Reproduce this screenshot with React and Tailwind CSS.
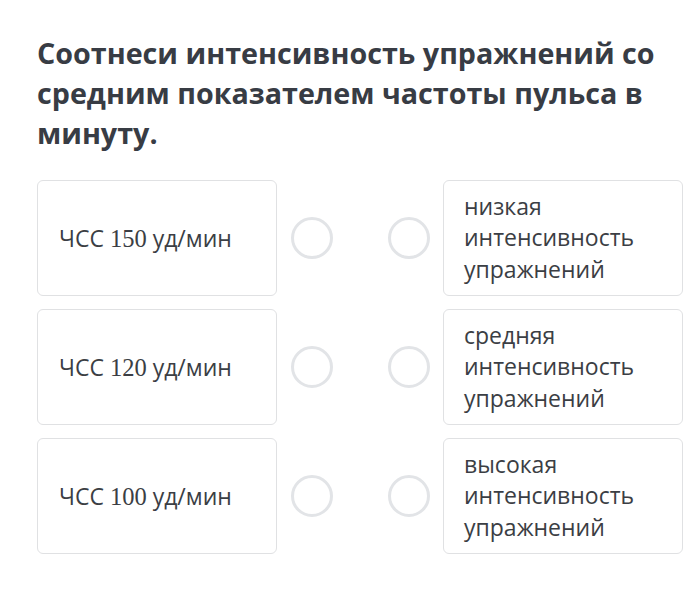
import React from "react";

const rows = [
  { n: "150", r: ["низкая", "интенсивность", "упражнений"] },
  { n: "120", r: ["средняя", "интенсивность", "упражнений"] },
  { n: "100", r: ["высокая", "интенсивность", "упражнений"] },
];

export default function App() {
  return (
    <div className="w-[699px] h-[613px] bg-white pl-[37px] pt-[33px] text-[#3b3e44]" style={{ fontFamily: '"Open Sans", sans-serif' }}>
      <h1 className="text-[28.7px] leading-[40px] font-bold text-[#383c44] w-[650px]">
        Соотнеси интенсивность упражнений со средним показателем частоты пульса в минуту.
      </h1>
      <div className="mt-[27px] flex flex-col gap-[13px]">
        {rows.map((row) => (
          <div key={row.n} className="flex items-center h-[116px]">
            <div className="w-[240px] h-full border-[1.5px] border-[#e0e1e3] rounded-[6px] flex items-center pl-[21px] text-[23px] leading-[31px]">
              <span>ЧСС&nbsp;</span>
              <span className="text-[24.5px]" style={{ fontFamily: '"Liberation Serif", serif' }}>{row.n}</span>
              <span>&nbsp;уд/мин</span>
            </div>
            <div className="ml-[14px] w-[42px] h-[42px] rounded-full border-[3px] border-[#e2e4e7]" />
            <div className="ml-[55px] w-[42px] h-[42px] rounded-full border-[3px] border-[#e2e4e7]" />
            <div className="ml-[13px] w-[240px] h-full border-[1.5px] border-[#e0e1e3] rounded-[6px] flex flex-col justify-center pl-[20px] text-[23px] leading-[31.5px]">
              {row.r.map((t) => (
                <div key={t}>{t}</div>
              ))}
            </div>
          </div>
        ))}
      </div>
    </div>
  );
}
